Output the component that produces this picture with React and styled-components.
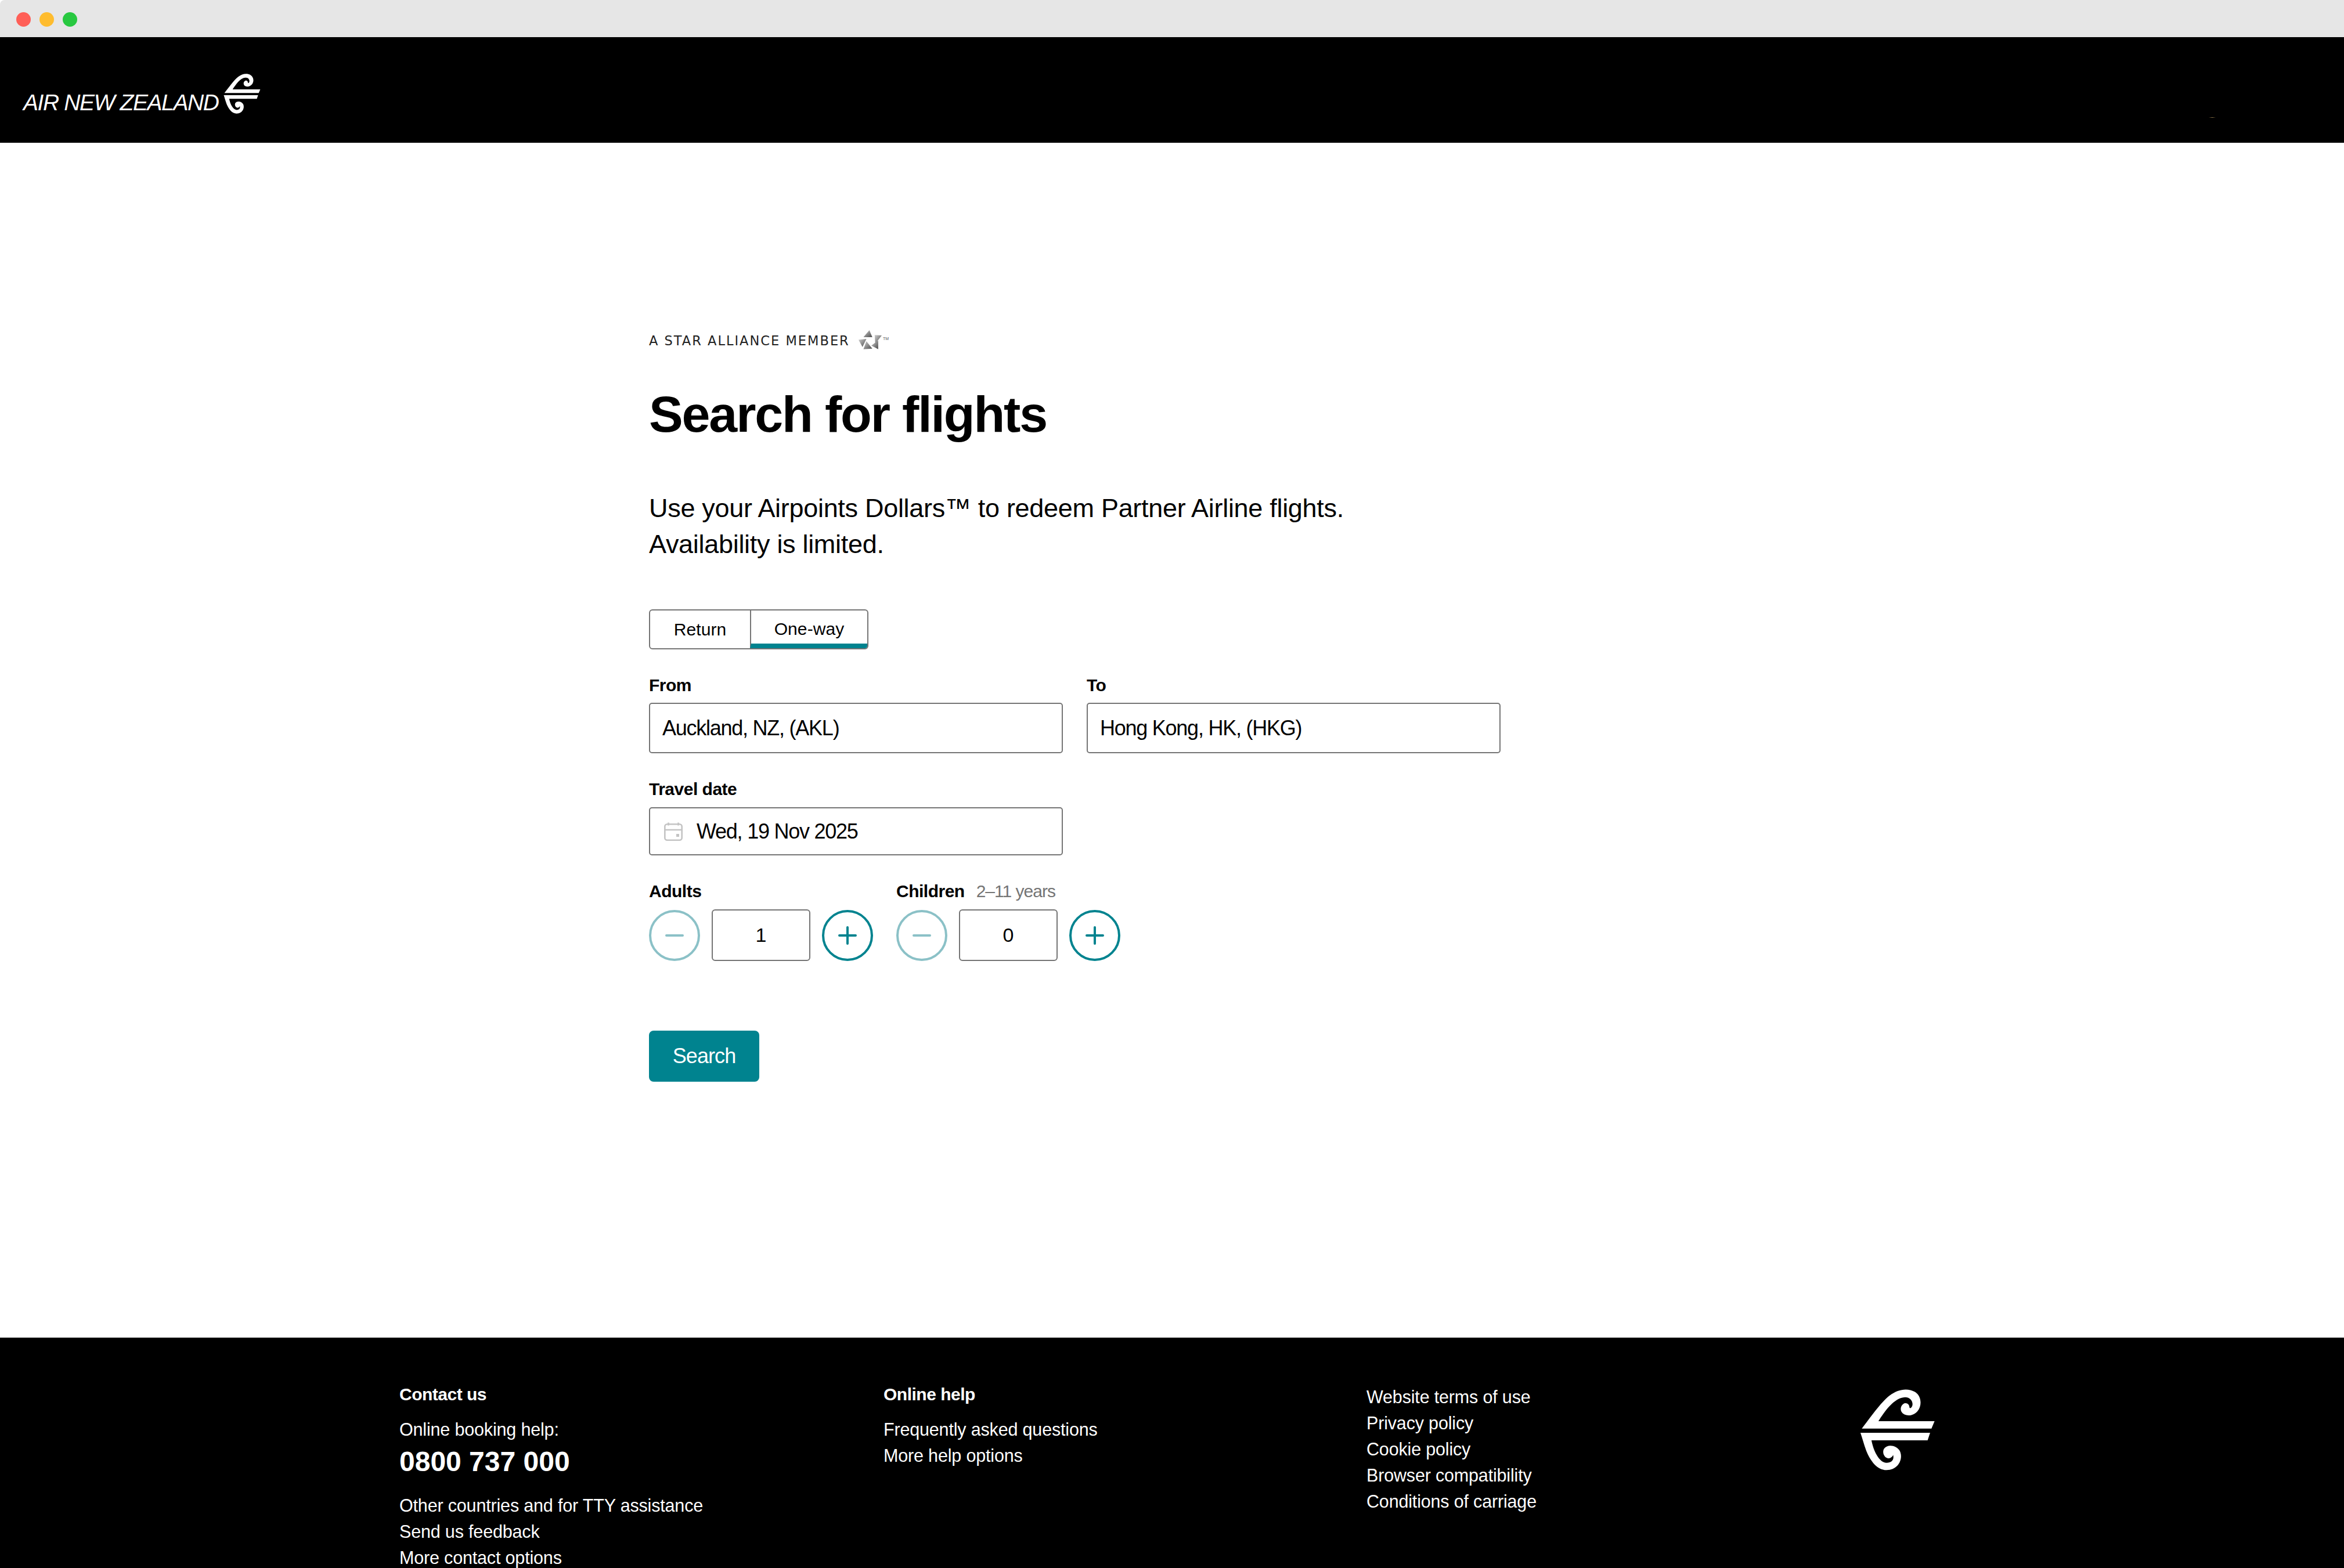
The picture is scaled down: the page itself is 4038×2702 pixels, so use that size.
import React from "react";
import styled, { createGlobalStyle } from "styled-components";

const TEAL = "#00838f";
const LINE = "#757575";
const SANS = `"Liberation Sans", Arial, sans-serif`;

const Global = createGlobalStyle`
  html, body { margin: 0; padding: 0; background: #fff; }
  * { box-sizing: border-box; }
  body { font-family: ${SANS}; color: #000; }
`;

const Page = styled.div`
  width: 4038px; height: 2702px; overflow: hidden;
  display: flex; flex-direction: column; background: #fff;
`;
const Chrome = styled.div`
  height: 64px; flex: none; background: #e6e6e6;
  display: flex; align-items: center; gap: 15px; padding: 2px 0 0 28px;
  border-top-left-radius: 8px;
`;
const Light = styled.span`
  width: 25px; height: 25px; border-radius: 50%;
  background: ${(p) => p.$c};
`;
const Header = styled.header`
  position: relative; height: 182px; flex: none; background: #000;
  display: flex; align-items: flex-start; padding: 63px 0 0 40px; gap: 8px;
`;
const Brand = styled.span`
  font-style: italic; color: #fff; font-size: 39px; line-height: 39px;
  margin-top: 30px; white-space: nowrap; letter-spacing: -1.4px; width: 337px;
`;
const Glint = styled.span`
  position: absolute; left: 3805px; top: 138px; width: 12px; height: 1px;
  background: linear-gradient(90deg, #000, #8a7448, #000);
`;
const Main = styled.main`
  flex: 1; padding: 321px 0 0 1118px;
`;
const StarRow = styled.div`
  display: flex; align-items: center; height: 40px; gap: 14px;
`;
const StarText = styled.span`
  font-family: "DejaVu Sans", ${SANS}; width: 347px;
  font-size: 22.5px; line-height: 40px; letter-spacing: 2px; color: #222;
  white-space: nowrap;
`;
const StarWrap = styled.span`
  display: flex; align-items: flex-start; gap: 2px; margin-top: -2px;
`;
const StarTm = styled.span`
  font-size: 7px; line-height: 7px; margin-top: 11px; color: #555;
`;
const Title = styled.h1`
  margin: 57px 0 0; font-size: 88px; line-height: 100px; font-weight: 700;
  letter-spacing: -2.15px; white-space: nowrap;
`;
const Intro = styled.p`
  margin: 81px 0 0; font-size: 45px; line-height: 61.5px; font-weight: 400;
  width: 1300px; letter-spacing: -0.3px;
`;
const Toggle = styled.div`
  margin-top: 82px; display: flex; width: 378px; height: 69px;
  border: 2px solid ${LINE}; border-radius: 6px; overflow: hidden;
`;
const ToggleItem = styled.div`
  width: ${(p) => p.$w}px; display: flex; align-items: center; justify-content: center;
  font-size: 30px; letter-spacing: 0.1px;
  ${(p) => p.$active && `border-left: 2px solid ${LINE}; border-bottom: 8px solid ${TEAL}; padding-top: 6px;`}
`;
const Row = styled.div`
  display: flex; gap: ${(p) => p.$gap}px;
`;
const Group = styled.div`
  margin-top: 44px; width: ${(p) => p.$w || 713}px;
`;
const Label = styled.label`
  display: block; font-size: 30px; line-height: 36px; font-weight: 700;
  letter-spacing: -0.5px; margin-bottom: ${(p) => p.$mb || 12}px; white-space: nowrap;
`;
const Hint = styled.span`
  font-weight: 400; color: ${LINE}; margin-left: 20px; letter-spacing: -1px;
`;
const Field = styled.div`
  height: ${(p) => p.$h || 87}px; border: 2px solid ${LINE}; border-radius: 5px;
  display: flex; align-items: center; padding-left: ${(p) => (p.$icon ? 24 : 21)}px; gap: 24px;
  font-size: 36px; letter-spacing: -1.25px; white-space: nowrap;
`;
const Counter = styled.div`
  display: flex; align-items: center; gap: 20px;
`;
const Round = styled.button`
  width: 88px; height: 88px; padding: 0; border-radius: 50%; background: #fff;
  border: 4px solid ${(p) => (p.$dim ? "#8bc1c7" : TEAL)};
  color: ${(p) => (p.$dim ? "#8bc1c7" : TEAL)};
  display: flex; align-items: center; justify-content: center;
`;
const Count = styled.div`
  width: 170px; height: 89px; border: 2px solid ${LINE}; border-radius: 6px;
  display: flex; align-items: center; justify-content: center; font-size: 34px;
`;
const Search = styled.button`
  margin-top: 120px; display: block; width: 190px; height: 88px; border: 0; border-radius: 8px;
  background: ${TEAL}; color: #fff; font-family: ${SANS}; font-size: 36px; letter-spacing: -0.9px;
`;
const Footer = styled.footer`
  height: 397px; flex: none; background: #000; color: #fff; overflow: hidden;
  display: flex; padding: 80px 0 0 688px;
`;
const Col = styled.div`
  width: ${(p) => p.$w}px; flex: none;
`;
const ColHead = styled.div`
  font-size: 30px; line-height: 36px; font-weight: 700; letter-spacing: -0.5px; margin-bottom: 20px;
`;
const FootLine = styled.div`
  font-size: 30.5px; line-height: 45px; letter-spacing: -0.17px; white-space: nowrap;
`;
const Phone = styled.div`
  font-size: 48px; line-height: 56px; font-weight: 700; margin: 5px 0 25px;
`;
const FootLogo = styled.div`
  margin-top: 9px;
`;

function Koru({ width, height }) {
  return (
    <svg width={width} height={height} viewBox="165 102 384 420" fill="#fff" style={{ flex: "none", display: "block" }}>
      <path d="M172 305 L532 305 L548 267 L258 267 C290 215 340 145 395 143 C425 142 440 170 432 190 C428 200 420 203 418 195 C418 180 405 170 392 175 C375 182 368 205 378 220 C392 242 435 245 460 215 C485 185 480 135 445 115 C410 95 360 100 315 135 C270 170 215 250 172 305 Z" />
      <path d="M165 327 L525 327 L512 366 L222 366 C232 420 262 482 300 482 C325 482 340 468 334 442 C330 452 318 462 305 458 C285 452 276 425 288 408 C305 385 350 390 368 420 C388 460 362 520 300 520 C250 520 215 470 195 420 C182 385 175 355 165 327 Z" />
    </svg>
  );
}

function Star() {
  return (
    <svg width="40" height="34" viewBox="0 0 118 90" preserveAspectRatio="none" style={{ display: "block" }}>
      <defs>
        <linearGradient id="sg" x1="0" y1="0" x2="1" y2="1">
          <stop offset="0" stopColor="#d0d0d0" />
          <stop offset="1" stopColor="#4a4a4a" />
        </linearGradient>
      </defs>
      <polygon points="55,0 25,32 70,32" fill="url(#sg)" />
      <polygon points="82,22 118,24 85,62" fill="url(#sg)" />
      <polygon points="100,47 100,87 65,70" fill="url(#sg)" />
      <polygon points="40,50 70,84 25,87" fill="url(#sg)" />
      <polygon points="0,44 40,40 20,77" fill="url(#sg)" />
    </svg>
  );
}

function Calendar() {
  return (
    <svg width="32" height="32" viewBox="0 0 32 32" fill="none" stroke="#c4c4c4" strokeWidth="2.6" style={{ flex: "none" }}>
      <rect x="1.3" y="3.3" width="29.4" height="27.4" rx="4" />
      <path d="M1 13h30M7.500 0.500v5M24.500 0.500v5" />
      <rect x="21" y="20" width="5" height="5" fill="#c4c4c4" stroke="none" />
    </svg>
  );
}

function Minus() {
  return (
    <svg width="32" height="32" viewBox="0 0 32 32" stroke="currentColor" strokeWidth="4" strokeLinecap="round">
      <path d="M2 16h28" />
    </svg>
  );
}

function Plus() {
  return (
    <svg width="32" height="32" viewBox="0 0 32 32" stroke="currentColor" strokeWidth="4" strokeLinecap="round">
      <path d="M2 16h28M16 2v28" />
    </svg>
  );
}

function Stepper({ value }) {
  return (
    <Counter>
      <Round $dim aria-label="decrease"><Minus /></Round>
      <Count>{value}</Count>
      <Round aria-label="increase"><Plus /></Round>
    </Counter>
  );
}

export default function App() {
  return (
    <Page>
      <Global />
      <Chrome>
        <Light $c="#ff5f57" />
        <Light $c="#febc2e" />
        <Light $c="#28c840" />
      </Chrome>
      <Header>
        <Brand>AIR NEW ZEALAND</Brand>
        <Koru width={64} height={69} />
        <Glint />
      </Header>
      <Main>
        <StarRow>
          <StarText>A STAR ALLIANCE MEMBER</StarText>
          <StarWrap>
            <Star />
            <StarTm>TM</StarTm>
          </StarWrap>
        </StarRow>
        <Title>Search for flights</Title>
        <Intro>
          Use your Airpoints Dollars™ to redeem Partner Airline flights.
          <br />
          Availability is limited.
        </Intro>
        <Toggle>
          <ToggleItem $w={172}>Return</ToggleItem>
          <ToggleItem $w={202} $active>One-way</ToggleItem>
        </Toggle>
        <Row $gap={41}>
          <Group>
            <Label>From</Label>
            <Field>Auckland, NZ, (AKL)</Field>
          </Group>
          <Group>
            <Label>To</Label>
            <Field>Hong Kong, HK, (HKG)</Field>
          </Group>
        </Row>
        <Group>
          <Label $mb={13}>Travel date</Label>
          <Field $h={83} $icon><Calendar />Wed, 19 Nov 2025</Field>
        </Group>
        <Row $gap={40}>
          <Group $w={386}>
            <Label $mb={13}>Adults</Label>
            <Stepper value="1" />
          </Group>
          <Group $w={386}>
            <Label $mb={13}>Children<Hint>2–11 years</Hint></Label>
            <Stepper value="0" />
          </Group>
        </Row>
        <Search>Search</Search>
      </Main>
      <Footer>
        <Col $w={834}>
          <ColHead>Contact us</ColHead>
          <FootLine>Online booking help:</FootLine>
          <Phone>0800 737 000</Phone>
          <FootLine>Other countries and for TTY assistance</FootLine>
          <FootLine>Send us feedback</FootLine>
          <FootLine>More contact options</FootLine>
        </Col>
        <Col $w={832}>
          <ColHead>Online help</ColHead>
          <FootLine>Frequently asked questions</FootLine>
          <FootLine>More help options</FootLine>
        </Col>
        <Col $w={851}>
          <FootLine>Website terms of use</FootLine>
          <FootLine>Privacy policy</FootLine>
          <FootLine>Cookie policy</FootLine>
          <FootLine>Browser compatibility</FootLine>
          <FootLine>Conditions of carriage</FootLine>
        </Col>
        <FootLogo>
          <Koru width={128} height={140} />
        </FootLogo>
      </Footer>
    </Page>
  );
}
